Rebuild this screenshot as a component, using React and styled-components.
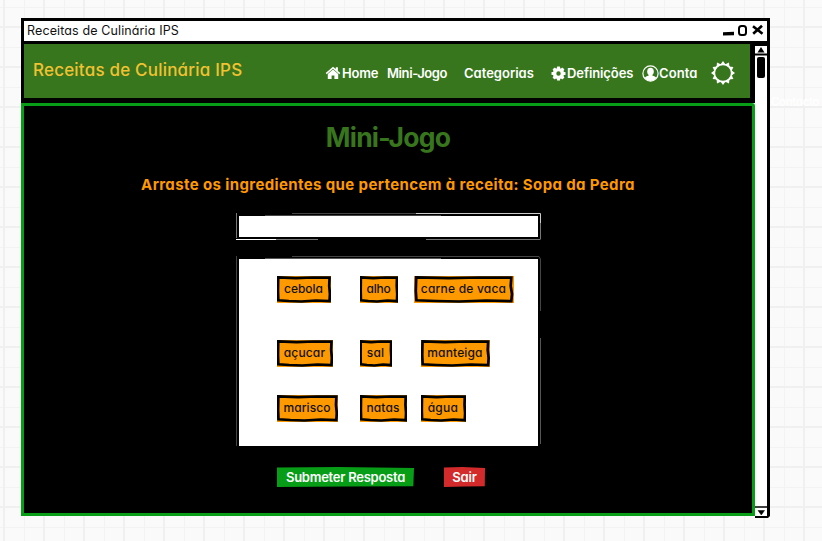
import React from 'react';
import styled, { createGlobalStyle } from 'styled-components';

const GlobalStyle = createGlobalStyle`
  * { box-sizing: border-box; }
  body {
    margin: 0;
    overflow: hidden;
    font-family: Inter, Lato, sans-serif;
    font-feature-settings: "cv11" 1;
  }
`;

const Canvas = styled.div`
  position: relative;
  width: 822px;
  height: 541px;
  padding: 18px 0 0 21px;
  overflow: hidden;
  background-color: #fafafa;
  background-image:
    linear-gradient(90deg, #f0f0f0 2px, transparent 2px),
    linear-gradient(#f0f0f0 2px, transparent 2px),
    linear-gradient(90deg, #f3f3f3 1px, transparent 1px),
    linear-gradient(#f3f3f3 1px, transparent 1px);
  background-size: 40px 40px;
  background-position: 3px 0, 0 26px, 24px 0, 0 7px;
`;

const Window = styled.div`
  display: flex;
  flex-direction: column;
  width: 749px;
  height: 499px;
`;

const TitleBar = styled.header`
  display: flex;
  justify-content: space-between;
  height: 26px;
  padding: 0 3px 0 3px;
  border: 3px solid #000;
  background: #fff;
`;

const Label = styled.span`
  display: block;
  white-space: nowrap;
  font-size: ${(p) => p.$size || 13}px;
  font-weight: ${(p) => p.$weight || 400};
  letter-spacing: ${(p) => p.$track || 0}px;
  line-height: ${(p) => p.$line || 20}px;
  color: ${(p) => p.$color || '#111'};
`;

const Controls = styled.svg`
  width: 42px;
  height: 20px;
`;

const Body = styled.div`
  display: flex;
  height: 473px;
`;

const Content = styled.div`
  width: 734px;
`;

const Nav = styled.nav`
  display: flex;
  align-items: flex-start;
  height: 59px;
  padding: 14px 0 0 9px;
  border: solid #000;
  border-width: 0 5px 5px 3px;
  background: #38761d;
`;

const Brand = styled.div`
  width: 292px;
`;

const Links = styled.div`
  display: flex;
  align-items: center;
  height: 30px;
`;

const NavItem = styled.a`
  display: flex;
  align-items: center;
  width: ${(p) => p.$width}px;
  gap: ${(p) => p.$gap || 0}px;
  svg { flex: none; }
`;

const Main = styled.main`
  display: flex;
  flex-direction: column;
  align-items: center;
  height: 413px;
  border: 3px solid #079d16;
  border-top-right-radius: 3px;
  background: #000;
`;

const Heading = styled.h1`
  height: 41px;
  margin: 13px 0 0;
`;

const Prompt = styled.h2`
  height: 24px;
  margin: 12px 0 0;
`;

const Box = styled.section`
  position: relative;
  width: 305px;
  height: ${(p) => p.$height}px;
  margin-top: ${(p) => p.$gap}px;
  border: 3px solid #000;
  background: #fff;
`;

const Outline = styled.svg`
  position: absolute;
  top: -3px;
  left: -3px;
  width: 305px;
  height: ${(p) => p.$height}px;
  pointer-events: none;
`;

const ChipGrid = styled.div`
  display: grid;
  grid-template-columns: 83px 61px 105px;
  grid-template-rows: 64px 55px 27px;
  padding: 17px 0 0 38px;
`;

const Chip = styled.div`
  position: relative;
  display: flex;
  justify-content: center;
  width: ${(p) => p.$width}px;
  height: 27px;
  margin-left: ${(p) => p.$shift || 0}px;
  background: #ff9900;
`;

const ChipFrame = styled.svg`
  position: absolute;
  inset: 0;
  width: 100%;
  height: 100%;
`;

const Actions = styled.div`
  display: flex;
  align-self: stretch;
  gap: 30px;
  margin: 18px 0 0 253px;
`;

const Button = styled.button`
  display: flex;
  justify-content: center;
  width: ${(p) => p.$width}px;
  height: 20px;
  padding: 0;
  border: 0;
  font-family: inherit;
  font-feature-settings: inherit;
  background: ${(p) => p.$fill};
  clip-path: polygon(0 3%, 45% 0, 100% 5%, 99.5% 96%, 50% 97%, 0 100%);
`;

const ScrollBar = styled.svg`
  width: 15px;
  height: 474px;
`;

const Offscreen = styled.div`
  position: absolute;
  left: 771px;
  top: 92px;
`;

const HomeIcon = () => (
  <svg width="16" height="14" viewBox="0 0 16 14" fill="#fff">
    <path d="M8 0.7 0.7 7.1 1.7 8.2 8 2.8 14.3 8.2 15.3 7.1 12.9 5V1.3H10.8V3.1Z" />
    <path d="M8 3.5 2.8 8.1V13H6.6V9.6H9.4V13H13.2V8.1Z" />
  </svg>
);

const gearTeeth = Array.from({ length: 8 }, (_, i) => i * 45);

const GearIcon = () => (
  <svg width="15" height="15" viewBox="0 0 15 15">
    <circle cx="7.5" cy="7.5" r="3.9" fill="none" stroke="#fff" strokeWidth="3.4" />
    {gearTeeth.map((a) => (
      <rect key={a} x="5.9" y="0.5" width="3.2" height="3" rx="0.6" fill="#fff" transform={`rotate(${a} 7.5 7.5)`} />
    ))}
  </svg>
);

const UserIcon = () => (
  <svg width="17" height="17" viewBox="0 0 17 17">
    <circle cx="8.5" cy="8.5" r="7.6" fill="none" stroke="#fff" strokeWidth="1.2" />
    <ellipse cx="8.5" cy="6.6" rx="3.3" ry="3.8" fill="#fff" />
    <path d="M2.4 13Q3.6 11.4 6.7 10.6V9H10.3V10.6Q13.4 11.4 14.6 13Q12 15.9 8.5 15.9Q5 15.9 2.4 13Z" fill="#fff" />
  </svg>
);

const sunRays = Array.from({ length: 12 }, (_, i) => i * 30);

const SunIcon = () => (
  <svg width="24" height="24" viewBox="0 0 24 24">
    <circle cx="12" cy="12" r="8.7" fill="none" stroke="#fff" strokeWidth="1.7" />
    {sunRays.map((a) => (
      <path key={a} d="M9.3 3.7 12 0 14.7 3.7Z" fill="#fff" transform={`rotate(${a} 12 12)`} />
    ))}
  </svg>
);

const Ingredient = ({ name, width, track, shift }) => (
  <Chip $width={width} $shift={shift}>
    <Label $size={12} $weight={500} $track={track} $line={26}>{name}</Label>
    <ChipFrame viewBox="0 0 100 27" preserveAspectRatio="none">
      <path
        d="M2.2 1.4 35 2.2 65 1.5 97.3 1.7 96.7 10 98 18 97.3 25.2 72 24.5 45 25.5 22 25 2.4 24.3 1.8 15Z"
        fill="none" stroke="#000" strokeWidth="2.7" vectorEffect="non-scaling-stroke"
      />
    </ChipFrame>
  </Chip>
);

const ingredients = [
  { name: 'cebola', width: 54, track: 0 },
  { name: 'alho', width: 38, track: -0.25 },
  { name: 'carne de vaca', width: 100, track: 0.2, shift: -7 },
  { name: 'açucar', width: 56, track: 0.15 },
  { name: 'sal', width: 32, track: 0.2 },
  { name: 'manteiga', width: 69, track: 0.15 },
  { name: 'marisco', width: 61, track: 0.08 },
  { name: 'natas', width: 47, track: 0.12 },
  { name: 'água', width: 45, track: 0.3 },
];

export default function App() {
  return (
    <Canvas>
      <GlobalStyle />
      <Window>
        <TitleBar>
          <Label $size={12.5} $track={0.12} $line={20}>Receitas de Culinária IPS</Label>
          <Controls viewBox="0 0 42 20">
            <path d="M1 11.2 12 10.8V14.3L1 14.5Z" />
            <rect x="17" y="5" width="7" height="9" rx="2.5" fill="none" stroke="#000" strokeWidth="2" />
            <path d="M31 5.3 40.5 12.7M40 4.8 31.2 12.8" stroke="#000" strokeWidth="2.6" />
          </Controls>
        </TitleBar>
        <Body>
          <Content>
            <Nav>
              <Brand>
                <Label $size={17} $weight={500} $track={0.2} $line={25} $color="#f1c232">Receitas de Culinária IPS</Label>
              </Brand>
              <Links>
                <NavItem $width={62} $gap={1}>
                  <HomeIcon />
                  <Label $weight={600} $track={-0.15} $color="#fff">Home</Label>
                </NavItem>
                <NavItem $width={77}>
                  <Label $weight={600} $track={-0.4} $color="#fff">Mini-Jogo</Label>
                </NavItem>
                <NavItem $width={87}>
                  <Label $weight={600} $track={0} $color="#fff">Categorias</Label>
                </NavItem>
                <NavItem $width={91} $gap={1}>
                  <GearIcon />
                  <Label $weight={600} $track={-0.1} $color="#fff">Definições</Label>
                </NavItem>
                <NavItem $width={69}>
                  <UserIcon />
                  <Label $weight={600} $track={0.1} $color="#fff">Conta</Label>
                </NavItem>
                <NavItem $width={24}><SunIcon /></NavItem>
              </Links>
            </Nav>
            <Main>
              <Heading>
                <Label $weight={700} $size={26.5} $track={-0.8} $line={36} $color="#38761d">Mini-Jogo</Label>
              </Heading>
              <Prompt>
                <Label $weight={700} $size={15} $track={0.38} $line={25} $color="#ff9900">
                  Arraste os ingredientes que pertencem à receita: Sopa da Pedra
                </Label>
              </Prompt>
              <Box $height={27} $gap={17}>
                <Outline $height={27} viewBox="0 0 305 27" fill="none" strokeWidth="1">
                  <path d="M.5 0V25" stroke="#777" />
                  <path d="M56 .5H180" stroke="#444" />
                  <path d="M180 .5H304.5V10" stroke="#ccc" />
                  <path d="M304.5 10V26.5" stroke="#777" />
                  <path d="M0 26.5H40" stroke="#fff" />
                  <path d="M40 26.5H82M190 26.5H304" stroke="#777" />
                  <path d="M29 2.5H205" stroke="#444" />
                </Outline>
              </Box>
              <Box $height={193} $gap={16}>
                <Outline $height={193} viewBox="0 0 305 193" fill="none" strokeWidth="1">
                  <path d="M.5 0V190M56 .5H303L304.5 3V55" stroke="#444" />
                  <path d="M304.5 82V188M29 2.5H205" stroke="#555" />
                </Outline>
                <ChipGrid>
                  {ingredients.map((item) => <Ingredient key={item.name} {...item} />)}
                </ChipGrid>
              </Box>
              <Actions>
                <Button $width={137} $fill="#079d16">
                  <Label $weight={600} $track={-0.25} $color="#fff">Submeter Resposta</Label>
                </Button>
                <Button $width={41} $fill="#d32b2b">
                  <Label $weight={600} $track={-0.1} $color="#fff">Sair</Label>
                </Button>
              </Actions>
            </Main>
          </Content>
          <ScrollBar viewBox="0 0 15 474">
            <path d="M0 0H15V474H0Z" fill="#fff" />
            <path d="M0 0H15V2H0Z" />
            <path d="M12 0H15V472L13 474H0V472H12Z" />
            <path d="M0 9.5H12V11.5H0Z" />
            <path d="M2.5 8.5 6 3 9.5 8.5Z" />
            <rect x="2" y="13" width="8" height="21" rx="2" />
            <path d="M0 463H12" stroke="#000" strokeWidth="1.5" />
            <path d="M3 466.5H9.5L6.3 471Z" stroke="#000" strokeWidth=".5" />
          </ScrollBar>
        </Body>
      </Window>
      <Offscreen>
        <Label $weight={600} $size={11.5} $track={-0.4} $color="#fff">Contacto</Label>
      </Offscreen>
    </Canvas>
  );
}
